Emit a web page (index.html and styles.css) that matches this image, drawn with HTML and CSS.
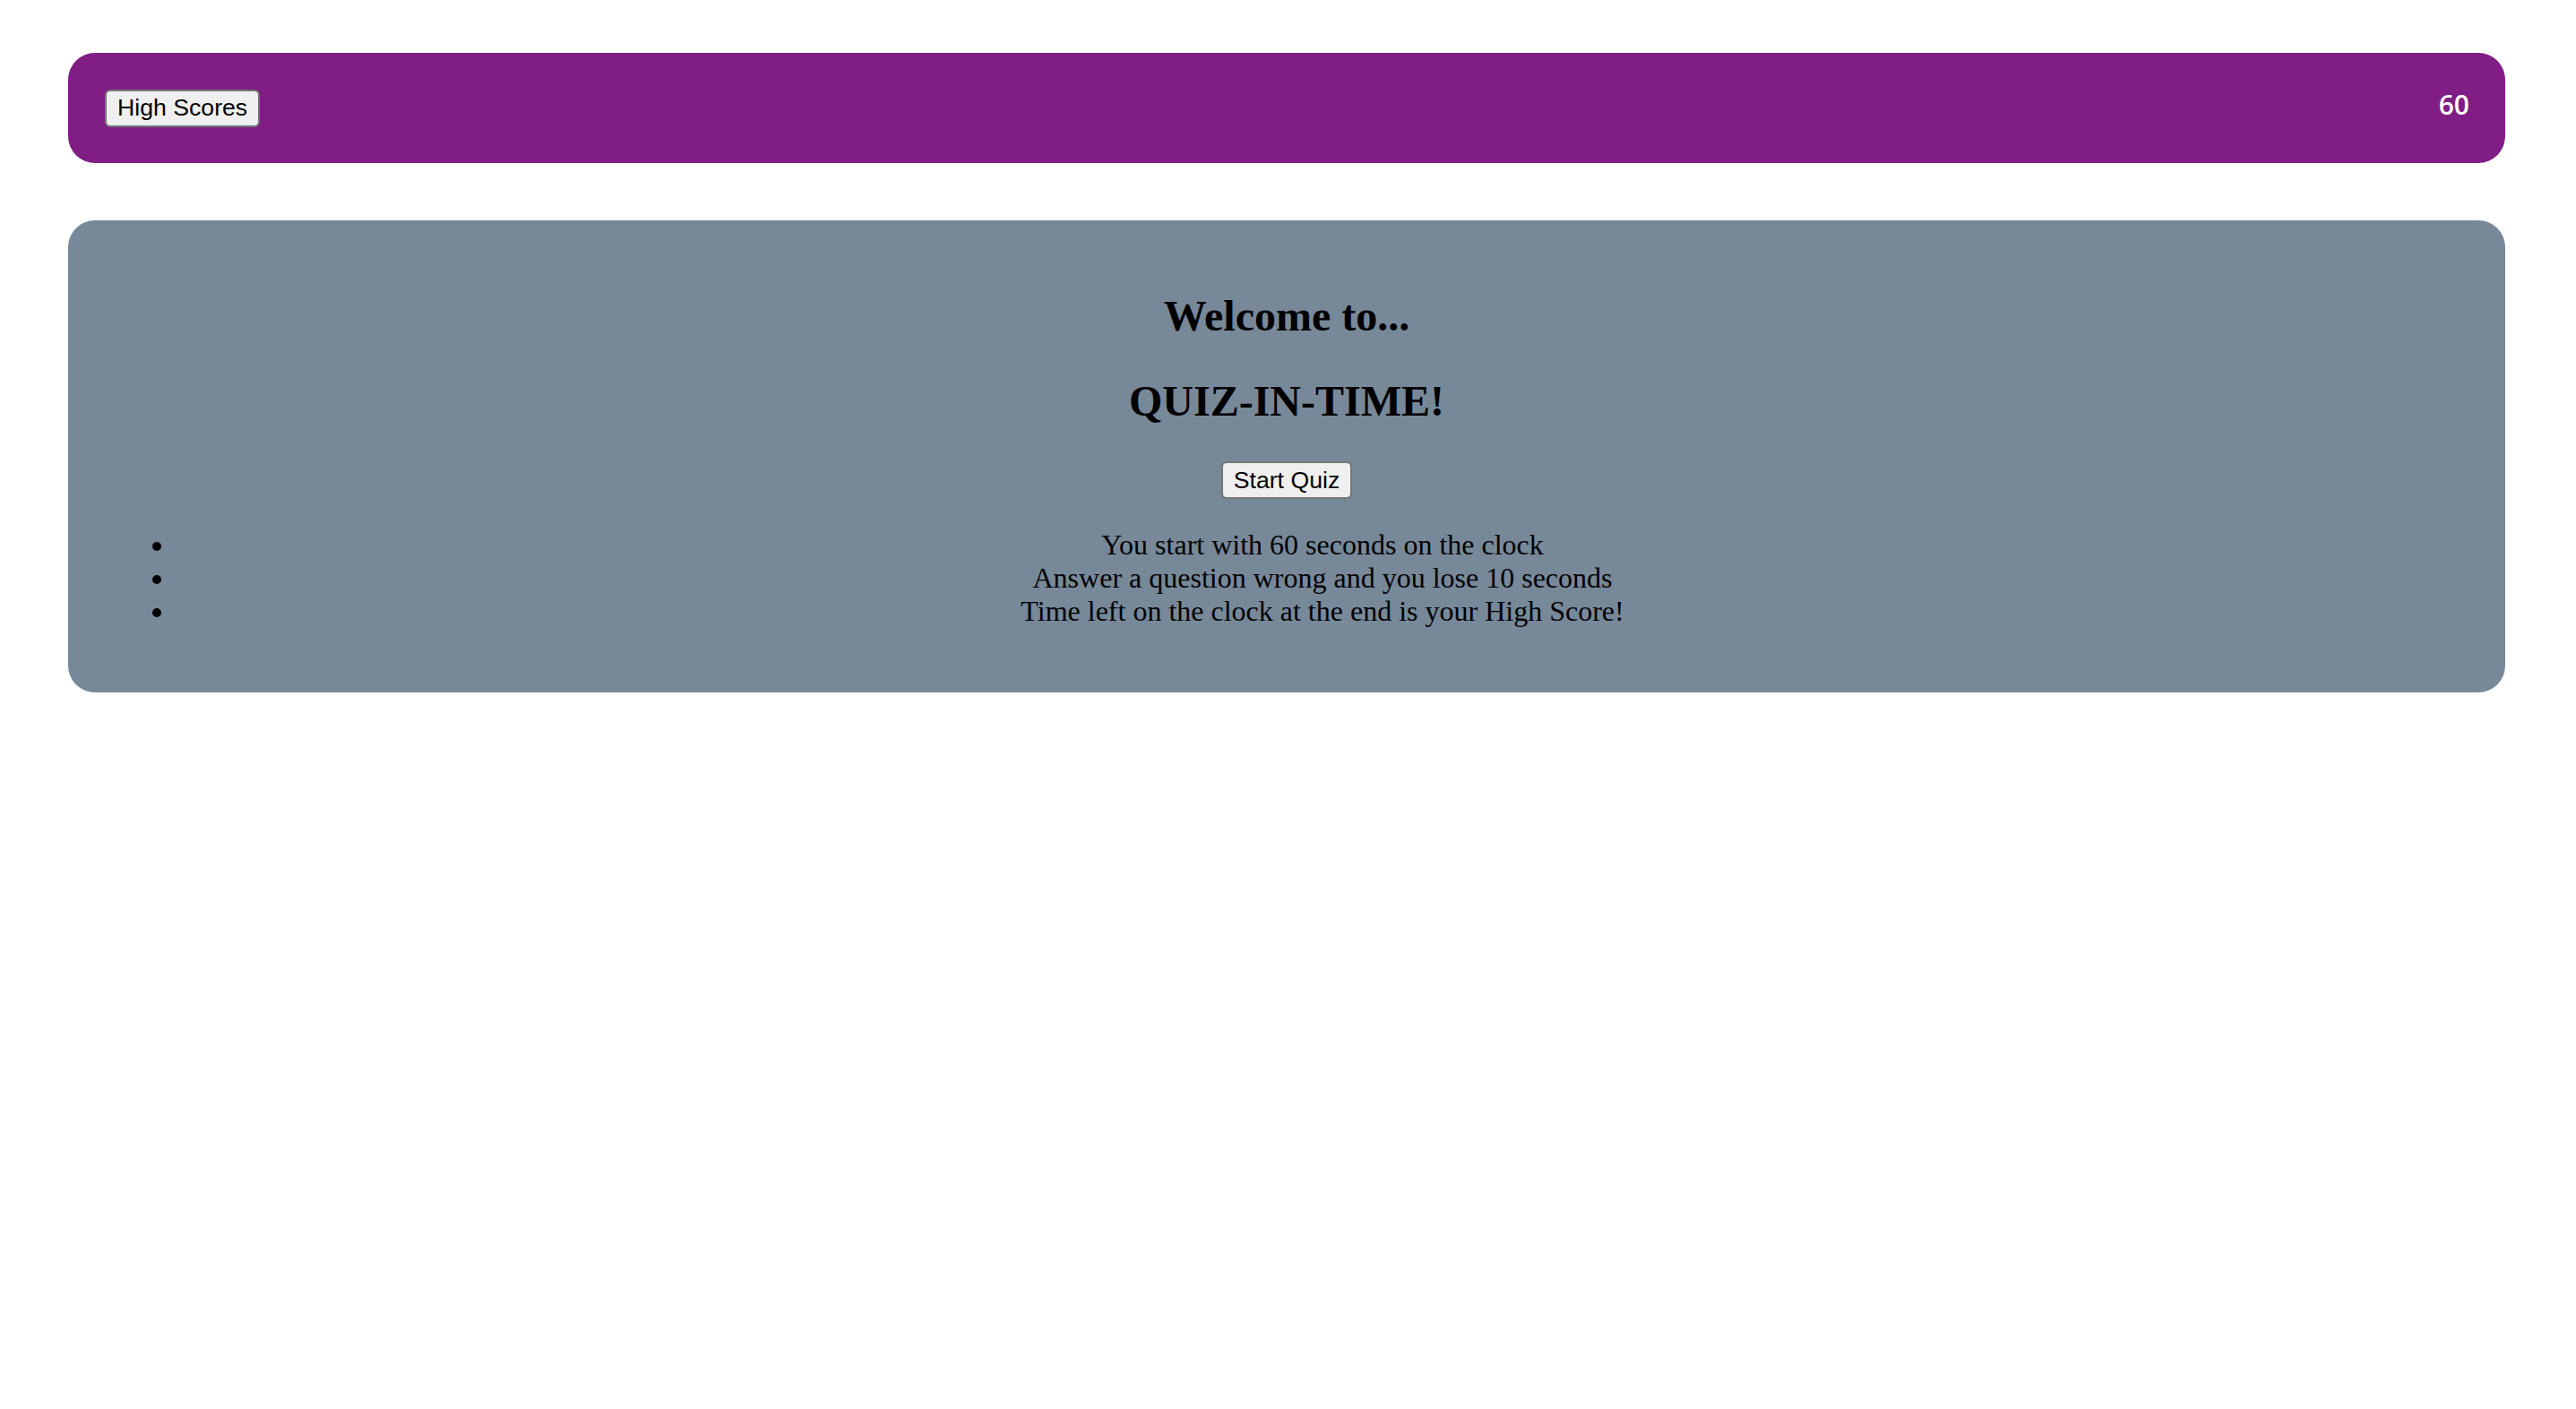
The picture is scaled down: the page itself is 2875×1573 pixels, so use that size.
FILE: index.html
```html
<!DOCTYPE html>
<html>
<head>
<meta charset="utf-8">
<title>Quiz-In-Time</title>
<link rel="stylesheet" href="styles.css">
</head>
<body>
<header class="topbar">
  <button class="btn">High Scores</button>
  <span class="timer">60</span>
</header>
<main class="card">
  <h2 class="title">Welcome to...</h2>
  <h2 class="title">QUIZ-IN-TIME!</h2>
  <div class="actions"><button class="btn">Start Quiz</button></div>
  <ul class="rules">
    <li>You start with 60 seconds on the clock</li>
    <li>Answer a question wrong and you lose 10 seconds</li>
    <li>Time left on the clock at the end is your High Score!</li>
  </ul>
</main>
</body>
</html>
```
FILE: styles.css
```css
html, body {
  margin: 0;
  background: #ffffff;
}
body {
  padding: 59px 79px 0 76px;
  font-family: "Liberation Serif", "Times New Roman", serif;
  color: #000;
}
.btn {
  font-family: "Liberation Sans", Arial, sans-serif;
  font-size: 26.67px;
  height: 42px;
  padding: 0 12px;
  background: #efefef;
  color: #000;
  border: 2px solid #767676;
  border-radius: 6px;
  line-height: 1;
}
.topbar {
  display: flex;
  align-items: center;
  justify-content: space-between;
  background: #801e85;
  border-radius: 30px;
  padding: 40px 40px 40px 41px;
  height: 43px;
}
.timer {
  color: #fff;
  font-family: "Open Sans", "Noto Sans", sans-serif;
  font-size: 30px;
  font-weight: 600;
  line-height: 1;
  padding-bottom: 8px;
}
.card {
  margin-top: 64px;
  background: #778899;
  border-radius: 30px;
  padding: 39px 40px 41px;
  text-align: center;
}
.title {
  font-size: 48px;
  font-weight: bold;
  margin: 40px 0;
  line-height: 55px;
}
.actions {
  line-height: 0;
  height: 42px;
}
.rules {
  font-size: 32px;
  line-height: 36.8px;
  margin: 33px 0 32px;
  padding-left: 80px;
}
```
